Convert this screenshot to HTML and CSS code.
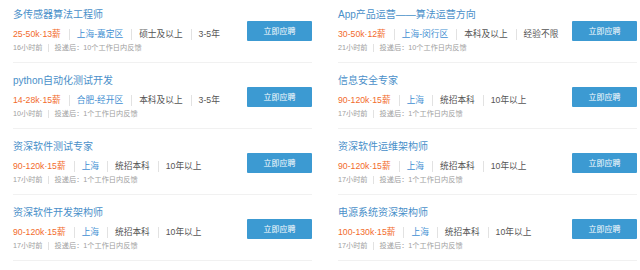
FILE: index.html
```html
<!DOCTYPE html>
<html lang="zh-CN">
<head>
  <meta charset="UTF-8" />
  <meta name="viewport" content="width=device-width, initial-scale=1.0"/>
  <title>职位列表</title>
  <link rel="stylesheet" href="styles.css">
</head>
<body>
  <ul class="jobs">
    <li class="job">
      <div class="info">
        <a class="title">多传感器算法工程师</a>
        <p class="tags"><span class="salary">25-50k·13薪</span><span class="city">上海-嘉定区</span><span>硕士及以上</span><span>3-5年</span></p>
        <p class="meta"><span>16小时前</span><span>投递后：10个工作日内反馈</span></p>
      </div>
      <button class="apply">立即应聘</button>
    </li>
    <li class="job">
      <div class="info">
        <a class="title">App产品运营——算法运营方向</a>
        <p class="tags"><span class="salary">30-50k·12薪</span><span class="city">上海-闵行区</span><span>本科及以上</span><span>经验不限</span></p>
        <p class="meta"><span>21小时前</span><span>投递后：10个工作日内反馈</span></p>
      </div>
      <button class="apply">立即应聘</button>
    </li>
    <li class="job">
      <div class="info">
        <a class="title">python自动化测试开发</a>
        <p class="tags"><span class="salary">14-28k·15薪</span><span class="city">合肥-经开区</span><span>本科及以上</span><span>3-5年</span></p>
        <p class="meta"><span>10小时前</span><span>投递后：1个工作日内反馈</span></p>
      </div>
      <button class="apply">立即应聘</button>
    </li>
    <li class="job">
      <div class="info">
        <a class="title">信息安全专家</a>
        <p class="tags"><span class="salary">90-120k·15薪</span><span class="city">上海</span><span>统招本科</span><span>10年以上</span></p>
        <p class="meta"><span>17小时前</span><span>投递后：1个工作日内反馈</span></p>
      </div>
      <button class="apply">立即应聘</button>
    </li>
    <li class="job">
      <div class="info">
        <a class="title">资深软件测试专家</a>
        <p class="tags"><span class="salary">90-120k·15薪</span><span class="city">上海</span><span>统招本科</span><span>10年以上</span></p>
        <p class="meta"><span>17小时前</span><span>投递后：1个工作日内反馈</span></p>
      </div>
      <button class="apply">立即应聘</button>
    </li>
    <li class="job">
      <div class="info">
        <a class="title">资深软件运维架构师</a>
        <p class="tags"><span class="salary">90-120k·15薪</span><span class="city">上海</span><span>统招本科</span><span>10年以上</span></p>
        <p class="meta"><span>17小时前</span><span>投递后：1个工作日内反馈</span></p>
      </div>
      <button class="apply">立即应聘</button>
    </li>
    <li class="job">
      <div class="info">
        <a class="title">资深软件开发架构师</a>
        <p class="tags"><span class="salary">90-120k·15薪</span><span class="city">上海</span><span>统招本科</span><span>10年以上</span></p>
        <p class="meta"><span>17小时前</span><span>投递后：1个工作日内反馈</span></p>
      </div>
      <button class="apply">立即应聘</button>
    </li>
    <li class="job">
      <div class="info">
        <a class="title">电源系统资深架构师</a>
        <p class="tags"><span class="salary">100-130k·15薪</span><span class="city">上海</span><span>统招本科</span><span>10年以上</span></p>
        <p class="meta"><span>17小时前</span><span>投递后：1个工作日内反馈</span></p>
      </div>
      <button class="apply">立即应聘</button>
    </li>
  </ul>
</body>
</html>
```

FILE: styles.css
```css
body {
  margin: 0;
  background: #fff;
  font-family: "Liberation Sans", "Noto Sans CJK SC", sans-serif;
  color: #555;
}

.jobs {
  list-style: none;
  margin: -3px 0 0 13px;
  padding: 0;
  display: grid;
  grid-template-columns: 299px 299px;
  column-gap: 26px;
}

.job {
  display: flex;
  align-items: center;
  height: 65px;
  border-bottom: 1px solid #f1f1f1;
}

.info {
  flex: 1;
  padding-top: 1px;
  white-space: nowrap;
}

.title {
  display: block;
  font-size: 10px;
  line-height: 14px;
  color: #4a8fc9;
}

.tags {
  margin: 4px 0 0;
  font-size: 8.7px;
  line-height: 16px;
  display: flex;
  align-items: center;
}

.tags span + span::before,
.meta span + span::before {
  content: "";
  display: inline-block;
  width: 1px;
  background: #e2e2e2;
  vertical-align: middle;
}

.tags span + span::before {
  height: 11px;
  margin: 0 7px 0 8px;
}

.salary {
  color: #f26b2c;
}

.city {
  color: #3f8fd2;
}

.meta {
  margin: 1px 0 0;
  font-size: 7.2px;
  line-height: 10px;
  color: #a0a0a0;
}

.meta span + span::before {
  height: 8px;
  margin: 0 6px 0 5px;
}

.apply {
  width: 65px;
  height: 20px;
  margin-top: 2px;
  border: none;
  border-radius: 1px;
  background: #3c9ad2;
  color: #fff;
  font-family: inherit;
  font-size: 8px;
  padding: 0;
  cursor: pointer;
}
```
